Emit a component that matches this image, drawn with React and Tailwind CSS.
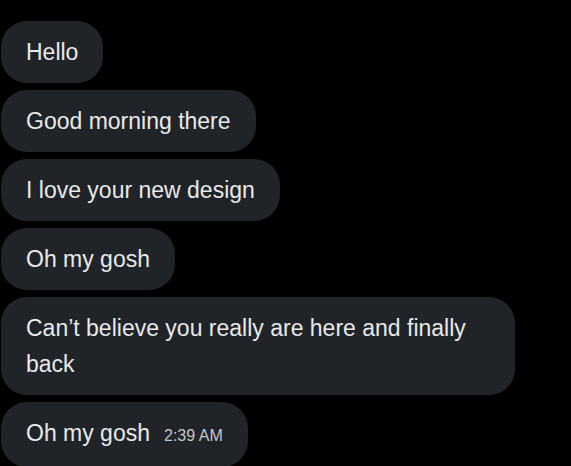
export default function App() {
  const messages = [
    'Hello',
    'Good morning there',
    'I love your new design',
    'Oh my gosh',
    'Can’t believe you really are here and finally back',
  ];

  return (
    <div className="w-[571px] h-[466px] bg-black overflow-hidden pt-[21px] pl-[1px] flex flex-col gap-[7px] font-['Liberation_Sans',Arial,sans-serif]">
      {messages.map((m, i) => (
        <div key={i} className="flex">
          <div className="bg-[#202327] text-[#e7e9ea] text-[23px] leading-[36px] rounded-[26px] px-[25px] py-[13px] max-w-[514px]">
            {m}
          </div>
        </div>
      ))}
      <div className="flex">
        <div className="bg-[#202327] text-[#e7e9ea] text-[23px] leading-[36px] rounded-[26px] px-[25px] py-[13px] flex items-baseline gap-[14px]">
          <span>Oh my gosh</span>
          <span className="text-[16px] text-[#c4c7ca]">2:39 AM</span>
        </div>
      </div>
    </div>
  );
}
